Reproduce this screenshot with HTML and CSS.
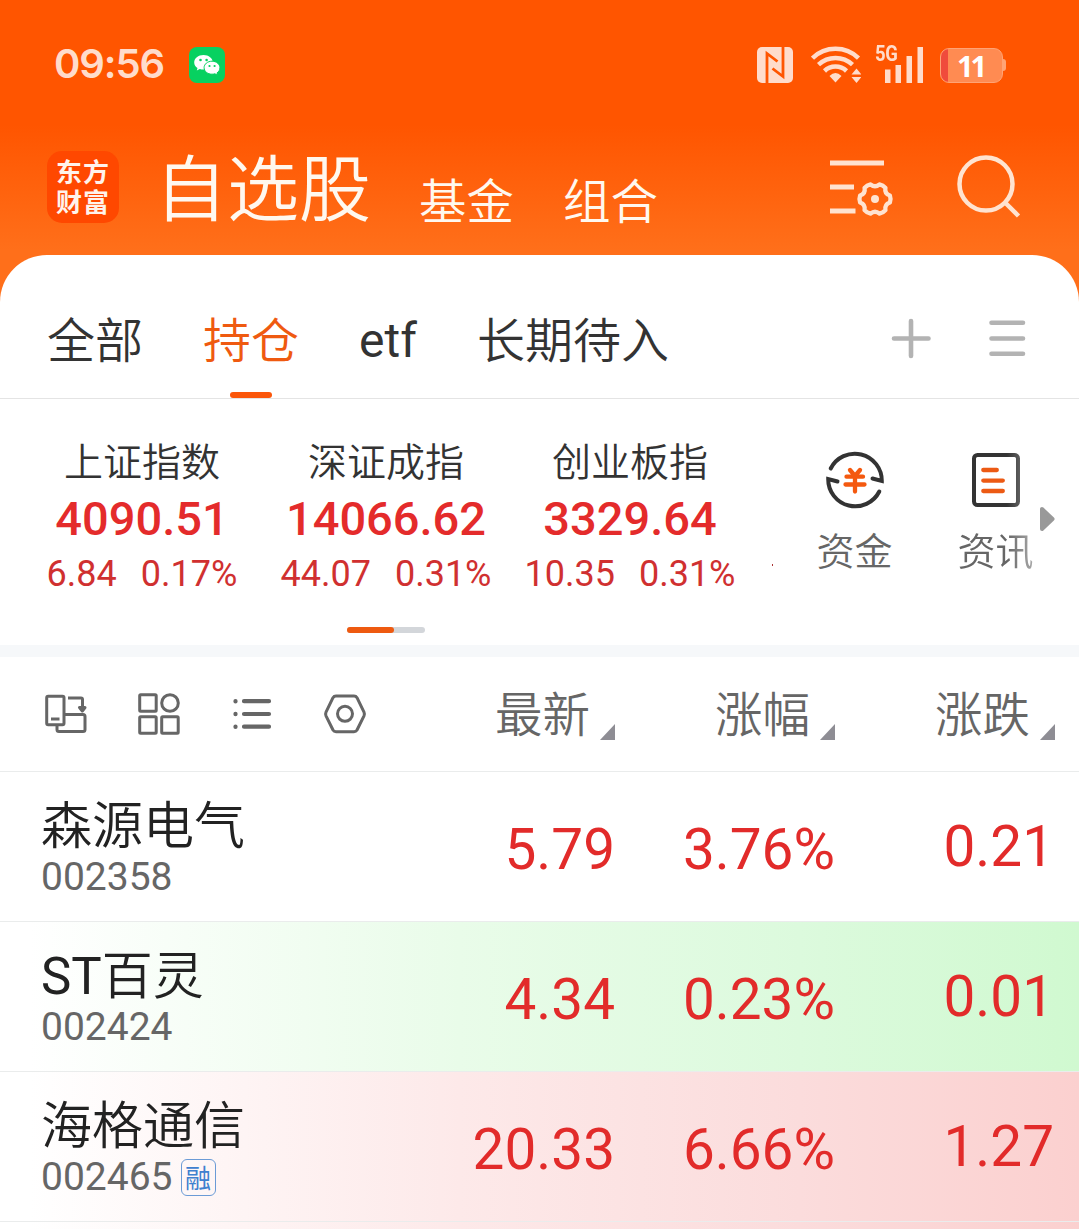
FILE: index.html
```html
<!DOCTYPE html>
<html lang="zh-CN">
<head>
<meta charset="utf-8">
<title>自选股</title>
<link rel="stylesheet" href="styles.css">
</head>
<body>
<div class="app">
  <header class="hero">
    <div class="status">
      <span class="clock">09:56</span>
      <svg class="wechat" width="36" height="36" viewBox="0 0 36 36">
        <rect width="36" height="36" rx="8" fill="#07d160"/>
        <path d="M14.500 8c-5.300 0-9.300 3.300-9.300 7.400 0 2.300 1.300 4.300 3.300 5.700l-.7 2.400 3-1.500c1.200.4 2.400.6 3.700.6 5.200 0 9.300-3.200 9.300-7.200S19.700 8 14.500 8z" fill="#fff"/>
        <path d="M23 14.200c-4.400 0-7.900 2.900-7.900 6.500s3.500 6.500 7.900 6.500c1 0 2-.2 2.900-.4l2.700 1.400-.6-2.300c1.800-1.200 2.900-3 2.900-5.200 0-3.600-3.500-6.500-7.900-6.500z" fill="#fff" stroke="#07d160" stroke-width="1"/>
        <g fill="#07d160"><circle cx="11.500" cy="13" r="1.300"/><circle cx="17.600" cy="13" r="1.300"/><circle cx="20.500" cy="19" r="1.100"/><circle cx="25.600" cy="19" r="1.100"/></g>
      </svg>
      <div class="signals">
        <svg width="36" height="36" viewBox="0 0 36 36">
          <rect width="36" height="36" rx="5" fill="#ffdccb"/>
          <path d="M10 36V6.500L20.500 14.500M26 0v29.500L15.500 21.500" fill="none" stroke="#ff5500" stroke-width="2.800"/>
        </svg>
        <svg class="wifi" width="50" height="37" viewBox="0 0 50 37">
          <g fill="none" stroke="#ffdccb" stroke-width="4.500">
            <path d="M1.500 12.200a33 33 0 0 1 46 0"/><path d="M7.500 18.700a25 25 0 0 1 34 0"/><path d="M13.500 25a16 16 0 0 1 22 0"/>
          </g>
          <path d="M18.500 30Q24.500 24 30.500 30L24.500 36.500zM40.500 28.500l5-6 5 6zM40.500 31l5 6 5-6z" fill="#ffdccb"/>
        </svg>
        <div class="cell">
          <span class="net">5G</span>
          <svg width="48" height="37" viewBox="0 0 48 37"><path d="M10 23.500h5.500V37H10zM20.500 19H26v18h-5.500zM31.500 10H37v27h-5.500zM42.500 1H48v36h-5.500z" fill="#ffdccb"/></svg>
        </div>
        <div class="battery">11</div>
      </div>
    </div>
    <nav class="titlebar">
      <div class="logo">东方<br>财富</div>
      <span class="title">自选股</span>
      <span class="subtitle">基金</span>
      <span class="subtitle">组合</span>
      <svg class="actions" width="192" height="64" viewBox="829 155 192 64" fill="none" stroke="#ffe3d0">
        <path d="M830 163h54M830 187h24M830 211h25.500" stroke-width="4.800"/>
        <g transform="translate(875 199)"><path stroke-width="4.300" stroke-linejoin="round" d="M14.900-3.440Q16.200 0 14.900 3.440 9.350 5.400 10.430 11.190 8.100 14.030 4.470 14.630 0 10.800-4.470 14.630-8.100 14.030-10.430 11.190-9.350 5.400-14.900 3.440-16.200 0-14.900-3.440-9.350-5.400-10.430-11.190-8.100-14.030-4.470-14.630 0-10.800 4.470-14.630 8.100-14.030 10.430-11.190 9.350-5.400 14.900-3.440Z"/><circle r="4" fill="#ffe3d0" stroke="none"/></g>
        <circle cx="986" cy="184" r="26.500" stroke-width="4.500"/><path d="M1005 202.500l13.500 13.500" stroke-width="4.500"/>
      </svg>
    </nav>
  </header>

  <main class="sheet">
    <nav class="tabs">
      <span class="tab">全部</span>
      <span class="tab active">持仓</span>
      <span class="tab latin">etf</span>
      <span class="tab">长期待入</span>
      <svg class="tab-tools" width="136" height="42" viewBox="890 318 136 42" stroke="#b3b3b3" stroke-width="4.600" stroke-linecap="round">
        <path d="M894 338.500h34.500M911 321v35M991.500 322.700h31.500M991.500 338.500h31.500M991.500 353.800h31.500"/>
      </svg>
    </nav>

    <section class="market">
      <div class="indices">
        <div class="index"><span class="index-name">上证指数</span><b>4090.51</b><span class="delta"><i>6.84</i><i>0.17%</i></span></div>
        <div class="index"><span class="index-name">深证成指</span><b>14066.62</b><span class="delta"><i>44.07</i><i>0.31%</i></span></div>
        <div class="index"><span class="index-name">创业板指</span><b>3329.64</b><span class="delta"><i>10.35</i><i>0.31%</i></span></div>
      </div>
      <span class="clipped"></span>
      <div class="links">
        <div class="link">
          <svg width="60" height="60" viewBox="825 450 60 60" fill="none" stroke="#333" stroke-width="4" stroke-linecap="round">
            <path d="M830.700 468.500A27 27 0 0 1 881.800 481L872.500 478.500M879.300 491.500A27 27 0 0 1 828.200 479L837.500 481.500"/>
            <path d="M850 470l5 6 5-6M846.500 476.700h16.500M845.500 484.500h19M855 476.500v15" stroke="#f4590f" stroke-width="4.300"/>
          </svg>
          <span>资金</span>
        </div>
        <div class="link fade">
          <svg width="60" height="60" viewBox="966 450 60 60" fill="none" stroke="#333" stroke-width="4" stroke-linecap="round">
            <rect x="974" y="455" width="44" height="50" rx="3.500"/>
            <path d="M983.300 470h13.500M983.300 480.600h19.500M983.300 491h19.500" stroke="#ec5a14" stroke-width="4.300"/>
          </svg>
          <span>资讯</span>
        </div>
        <svg class="more" width="16" height="26" viewBox="0 0 16 26"><path d="M3 3v20L13.500 13z" fill="#999" stroke="#999" stroke-width="4" stroke-linejoin="round"/></svg>
      </div>
      <div class="pager"><span></span></div>
    </section>

    <section class="quotes">
      <div class="row head">
        <svg class="view-tools" width="324" height="44" viewBox="44 692 324 44" fill="none" stroke="#666" stroke-width="3" stroke-linejoin="round">
          <rect x="46.700" y="696.200" width="17.300" height="28.500" rx="1.500"/><path d="M51 719h8.500"/>
          <path d="M65 714.500h18q2 0 2 2v13q0 2-2 2H59q-2 0-2-2V725M68 698h13q1.500 0 1.500 1.500V707"/>
          <path d="M79.500 707.500h5.500l-2.700 3.500z" fill="#666"/>
          <rect x="139.700" y="694.700" width="16.500" height="16.500" rx="1"/><rect x="139.700" y="716.700" width="16.500" height="16.500" rx="1"/><rect x="161.700" y="716.700" width="16.500" height="16.500" rx="1"/><circle cx="170" cy="703" r="8.300"/>
          <path d="M244 701.200h25M244 714h25M244 726.700h25M235.500 701v.4M235.500 713.800v.4M235.500 726.500v.4" stroke-width="4.200" stroke-linecap="round"/>
          <path d="M336 696h18q2 0 3 1.700l7 14.500q.8 1.800 0 3.600l-7 14.200q-1 1.700-3 1.700h-18q-2 0-3-1.700l-7-14.200q-.8-1.800 0-3.600l7-14.500q1-1.700 3-1.700z"/><circle cx="345" cy="713.800" r="7.500"/>
        </svg>
        <span class="sort">最新</span><span class="sort">涨幅</span><span class="sort">涨跌</span>
      </div>
      <div class="row">
        <div class="stock"><span class="stock-name">森源电气</span><span class="code">002358</span></div>
        <span class="num">5.79</span><span class="num">3.76%</span><span class="num change">0.21</span>
      </div>
      <div class="row green">
        <div class="stock"><span class="stock-name">ST百灵</span><span class="code">002424</span></div>
        <span class="num">4.34</span><span class="num">0.23%</span><span class="num change">0.01</span>
      </div>
      <div class="row red">
        <div class="stock"><span class="stock-name">海格通信</span><span class="code">002465<em class="tag">融</em></span></div>
        <span class="num">20.33</span><span class="num">6.66%</span><span class="num change">1.27</span>
      </div>
      <div class="row red"></div>
    </section>
  </main>
</div>
</body>
</html>
```
FILE: styles.css
```css
* { box-sizing: border-box; }
body { margin: 0; background: #fff; font-family: "Noto Sans CJK SC DemiLight", "Noto Sans CJK SC", sans-serif; font-weight: 350; }
i, em { font-style: normal; }
svg { display: block; flex: none; }
.app { width: 1079px; height: 1229px; overflow: hidden; }

.hero {
  height: 303px;
  background: linear-gradient(#ff5500 0, #ff5500 125px, #ff6f1a 250px);
}
.status { height: 129px; padding: 0 73px 0 54px; display: flex; align-items: center; }
.clock { width: 135px; margin-top: -2px; font: 600 40px/40px Inter, sans-serif; color: #ffdccb; letter-spacing: -1.1px; }
.signals { margin-left: auto; display: flex; align-items: center; }
.wifi { margin-left: 18px; }
.cell { position: relative; margin-left: 14px; }
.net {
  position: absolute; left: 0; top: -2px;
  font: 700 22px/20px Roboto, sans-serif; letter-spacing: -.5px; color: #ffdccb;
  transform: scaleX(.84); transform-origin: 0 0;
}
.battery {
  position: relative; width: 63px; height: 35px; margin: 1px 3px 0 17px; padding-right: 2px;
  border-radius: 9px; border: 1px solid #ffa375;
  background: linear-gradient(90deg, #f04b3c 7px, #ff8b52 7px);
  color: #fff; text-align: center; font: 700 29px/34px "Open Sans", sans-serif; letter-spacing: -3px;
}
.battery::after {
  content: ""; position: absolute; right: -4px; top: 10px;
  width: 3px; height: 12px; border-radius: 0 3px 3px 0; background: #ffa375;
}
.titlebar { display: flex; height: 126px; padding: 22px 58px 0 47px; color: #fff8ef; }
.logo {
  width: 72px; height: 72px; padding: 7px 0 0 9px; border-radius: 15px;
  background: #ff4800; color: #fff3ec; letter-spacing: 1px;
  font: 700 26px/30px "Liberation Sans", "Noto Sans CJK SC", sans-serif;
}
.title { margin-left: 36px; font-size: 72px; line-height: 65px; }
.subtitle { margin-left: 48px; font-size: 47.500px; line-height: 95px; }
.subtitle + .subtitle { margin-left: 49px; }
.actions { margin: 4px 0 0 auto; }

.sheet { position: relative; margin-top: -48px; height: 974px; background: #fff; border-radius: 47px 47px 0 0; }
.tabs { display: flex; height: 144px; padding: 0 53px 0 47px; gap: 60px; border-bottom: 1px solid #e4e4e4; }
.tab { position: relative; font-size: 48px; line-height: 165px; color: #333; }
.tab.latin { font-family: Roboto, sans-serif; font-weight: 400; line-height: 172px; }
.tab.active { color: #ef5a10; }
.tab.active::after {
  content: ""; position: absolute; left: 27px; top: 137px;
  width: 42px; height: 6px; border-radius: 3px; background: #fb560a;
}
.tab-tools { margin: 63px 0 0 auto; }

.market { position: relative; height: 246px; display: flex; padding-left: 20px; }
.indices { display: flex; }
.index { width: 244px; padding-top: 30px; display: flex; flex-direction: column; align-items: center; }
.index-name { font-size: 39px; line-height: 60px; color: #333; }
.index b { font: 500 47px/60px Roboto, sans-serif; color: #e42b2b; }
.delta { display: flex; gap: 24px; font: 400 36px/50px Roboto, sans-serif; color: #d03030; }
.clipped { width: 1px; height: 2px; margin: 165px 0 0 20px; background: #a33; }
.links { position: relative; display: flex; margin-left: 11px; }
.link { width: 141px; padding-top: 51px; display: flex; flex-direction: column; align-items: center; }
.link span { font-size: 38px; line-height: 77px; color: #666; }
.fade { mask-image: linear-gradient(90deg, #000 82px, rgba(0,0,0,.5) 112px); }
.more { position: absolute; left: 255px; top: 107px; }
.pager { position: absolute; left: 347px; top: 228px; width: 78px; height: 6px; border-radius: 3px; background: #d3d6da; }
.pager span { display: block; width: 47px; height: 6px; border-radius: 3px; background: #ee5a10; }

.quotes { border-top: 12px solid #f6f8fa; }
.row {
  display: grid; grid-template-columns: 395px repeat(3, 220px);
  height: 150px; border-bottom: 1px solid #eaecec;
}
.head { height: 115px; }
.view-tools { margin: 35px 0 0 44px; }
.sort { position: relative; padding-right: 25px; text-align: right; font-size: 47.500px; line-height: 109px; color: #666; }
.sort::after {
  content: ""; position: absolute; right: 0; top: 67px; width: 15px; height: 16px;
  background: #8e8d94; clip-path: polygon(100% 0, 100% 100%, 0 100%);
}
.stock { padding: 25px 0 0 41px; display: flex; flex-direction: column; }
.stock-name { font: 400 51px/60px Roboto, "Noto Sans CJK SC DemiLight", "Noto Sans CJK SC", sans-serif; color: #222; }
.code { display: flex; align-items: center; font: 400 39px/40px Roboto, sans-serif; color: #666; }
.tag {
  width: 35px; height: 37px; margin-left: 8px; border: 1.500px solid #6b9bd6; border-radius: 6px;
  text-align: center; font: 400 26px/33px "Noto Sans CJK SC", sans-serif; color: #3f80cf;
}
.num { text-align: right; font: 400 56.700px/156px Roboto, sans-serif; color: #e22b2a; }
.change { line-height: 150px; padding-right: 1px; }
.green { background: linear-gradient(90deg, #fff 30px, #e9fce9 460px, #dcfadd 800px, #d0f9d0); }
.red { background: linear-gradient(90deg, #fff 30px, #fde9e9 460px, #fbdcdc 800px, #fbd0cf); }
```
